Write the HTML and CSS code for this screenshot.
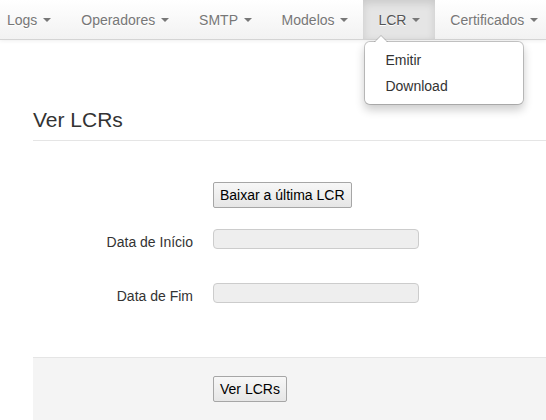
FILE: index.html
```html
<!DOCTYPE html>
<html lang="pt">
<head>
<meta charset="utf-8">
<link rel="stylesheet" href="styles.css">
</head>
<body>
<header class="navbar">
  <ul class="nav">
    <li class="nav-item"><a>Logs <b class="caret"></b></a></li>
    <li class="nav-item"><a>Operadores <b class="caret"></b></a></li>
    <li class="nav-item"><a>SMTP <b class="caret"></b></a></li>
    <li class="nav-item"><a>Modelos <b class="caret"></b></a></li>
    <li class="nav-item open"><a>LCR <b class="caret"></b></a>
      <ul class="dropdown-menu">
        <li><a>Emitir</a></li>
        <li><a>Download</a></li>
      </ul>
    </li>
    <li class="nav-item"><a>Certificados <b class="caret"></b></a></li>
  </ul>
</header>
<main class="container">
  <form class="form-horizontal">
    <div class="legend">Ver LCRs</div>
    <div class="control-group first">
      <div class="controls"><button type="button" class="btn">Baixar a última LCR</button></div>
    </div>
    <div class="control-group">
      <label class="control-label">Data de Início</label>
      <div class="controls"><span class="input"></span></div>
    </div>
    <div class="control-group">
      <label class="control-label">Data de Fim</label>
      <div class="controls"><span class="input"></span></div>
    </div>
    <div class="form-actions">
      <button type="button" class="btn">Ver LCRs</button>
    </div>
  </form>
</main>
</body>
</html>
```
FILE: styles.css
```css
html, body {
  margin: 0;
  padding: 0;
  background: #fff;
  overflow: hidden;
  font-family: "Liberation Sans", Arial, sans-serif;
  font-size: 14px;
  line-height: 20px;
  color: #333;
}
.navbar {
  height: 39px;
  background: linear-gradient(to bottom, #ffffff, #f2f2f2);
  border-bottom: 1px solid #d4d4d4;
  box-shadow: 0 1px 4px rgba(0,0,0,0.065);
  position: relative;
  z-index: 2;
}
.nav {
  list-style: none;
  margin: 0 0 0 -8px;
  padding: 0;
  display: flex;
  white-space: nowrap;
}
.nav-item {
  position: relative;
}
.nav-item > a {
  display: block;
  padding: 10px 15px 9px;
  color: #777;
  text-shadow: 0 1px 0 #fff;
}
.nav-item.open > a {
  background: #e5e5e5;
  color: #555;
  box-shadow: inset 0 3px 8px rgba(0,0,0,0.125);
}
.caret {
  display: inline-block;
  width: 0;
  height: 0;
  vertical-align: top;
  margin-top: 8px;
  margin-left: 2px;
  border-top: 4px solid #777;
  border-left: 4px solid transparent;
  border-right: 4px solid transparent;
}
.dropdown-menu {
  position: absolute;
  top: 41px;
  left: 1px;
  min-width: 158px;
  margin: 0;
  padding: 5px 0;
  list-style: none;
  background: #fff;
  border: 1px solid rgba(0,0,0,0.2);
  border-radius: 6px;
  box-shadow: 0 5px 10px rgba(0,0,0,0.2);
  background-clip: padding-box;
}
.dropdown-menu::before {
  content: "";
  position: absolute;
  top: -7px;
  left: 9px;
  border-left: 7px solid transparent;
  border-right: 7px solid transparent;
  border-bottom: 7px solid rgba(0,0,0,0.2);
}
.dropdown-menu::after {
  content: "";
  position: absolute;
  top: -6px;
  left: 10px;
  border-left: 6px solid transparent;
  border-right: 6px solid transparent;
  border-bottom: 6px solid #fff;
}
.dropdown-menu a {
  display: block;
  padding: 3px 20px;
  color: #333;
}
.container {
  margin-left: 33px;
  width: 700px;
  padding-top: 60px;
}
.legend {
  font-size: 21px;
  line-height: 40px;
  color: #333;
  border-bottom: 1px solid #e5e5e5;
  margin-bottom: 41px;
}
.control-group {
  display: flex;
  margin-bottom: 31px;
}
.control-group.first {
  margin-bottom: 21px;
}
.control-label {
  width: 160px;
  flex: none;
  text-align: right;
  padding-top: 3px;
  color: #333;
}
.controls {
  margin-left: 180px;
}
.control-label + .controls {
  margin-left: 20px;
}
.btn {
  font-family: "Liberation Sans", Arial, sans-serif;
  font-size: 14px;
  line-height: 18px;
  height: 26px;
  padding: 2px 6px 3px;
  color: #000;
  background: linear-gradient(to bottom, #f7f7f7, #e6e6e6);
  border: 1px solid #a6a6a6;
  border-radius: 2px;
  margin: 0;
}
.input {
  display: block;
  width: 204px;
  height: 18px;
  background: #eeeeee;
  border: 1px solid #cccccc;
  border-radius: 4px;
}
.form-actions {
  margin-top: 51px;
  background: #f4f4f4;
  border-top: 1px solid #e5e5e5;
  padding: 18px 20px 40px 180px;
}
```
